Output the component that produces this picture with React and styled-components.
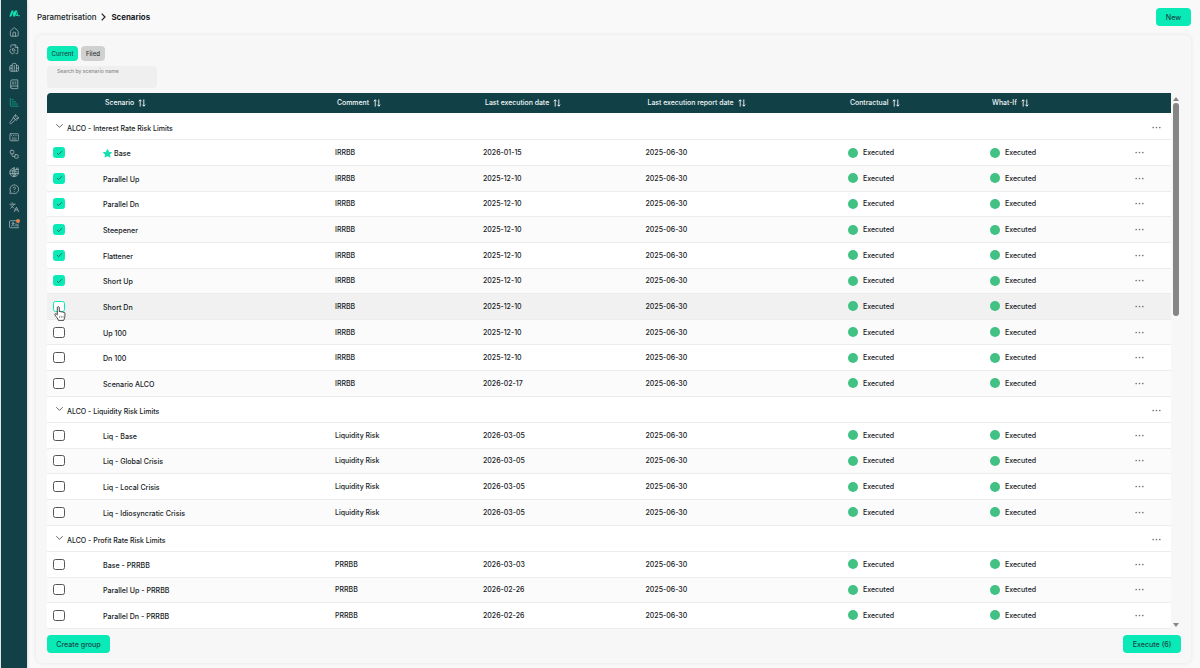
import styled, { createGlobalStyle, css } from 'styled-components';
import {
  ChartBarIncreasing,
  FileChartPie,
  House,
  Keyboard,
  Languages,
  MessageCircleQuestionMark,
  Workflow,
} from 'lucide-react';

const GlobalStyle = createGlobalStyle`
  * {
    box-sizing: border-box;
  }

  body {
    margin: 0;
    overflow: hidden;
    background: #f9f9f9;
    color: #14191c;
    font-family: Inter, 'Liberation Sans', sans-serif;
    font-size: 7px;
    font-weight: 450;
  }

  button {
    font-family: inherit;
  }
`;

const Layout = styled.div`
  display: flex;
  height: 668px;
`;

const Sidebar = styled.nav`
  display: flex;
  flex-direction: column;
  align-items: center;
  width: 27px;
  padding-top: 9px;
  background: #124047;
  border-left: 1px solid #dfe6e7;
  box-shadow: 1px 0 2px rgba(0, 0, 0, 0.12);
`;

const Logo = styled.svg`
  width: 11px;
  height: 9px;
  margin-bottom: 5px;
  fill: #12e3b0;
`;

const NavItem = styled.a`
  position: relative;
  display: flex;
  align-items: center;
  justify-content: center;
  height: 17.5px;
  color: ${({ $active }) => ($active ? '#10a887' : '#a3b8bb')};
`;

const Badge = styled.span`
  position: absolute;
  top: 3px;
  right: -1px;
  width: 4px;
  height: 4px;
  border-radius: 50%;
  background: #e8824a;
`;

const Main = styled.main`
  display: flex;
  flex-direction: column;
  flex: 1;
  min-width: 0;
  padding: 0 9px 5px;
`;

const TopBar = styled.header`
  display: flex;
  align-items: center;
  justify-content: space-between;
  height: 35px;
  padding: 0 0 1px 1px;
`;

const Breadcrumb = styled.div`
  display: flex;
  align-items: center;
  gap: 5px;
  font-size: 7.9px;
`;

const Current = styled.b`
  font-weight: 650;
  color: #15191c;
`;

const Button = styled.button`
  height: 18px;
  width: ${({ $width }) => $width}px;
  padding: 0;
  border: 0;
  border-radius: 4px;
  background: #09eab6;
  color: #17494a;
  font-size: 7.1px;
  font-weight: 500;
`;

const Card = styled.section`
  display: flex;
  flex-direction: column;
  flex: 1;
  padding: 10px 10px 0 11px;
  border-radius: 6px;
  background: #f7f7f7;
  box-shadow: 0 0 4px rgba(0, 0, 0, 0.09);
`;

const Tabs = styled.div`
  display: flex;
  gap: 3px;
  margin-top: 1px;
`;

const Tab = styled.button`
  width: ${({ $active }) => ($active ? 31 : 24)}px;
  height: 15px;
  padding: 0 0 1px;
  border: 0;
  border-radius: 4px;
  background: ${({ $active }) => ($active ? '#09eab6' : '#d0d0d0')};
  color: ${({ $active }) => ($active ? '#17494a' : '#333')};
  font-size: 6.1px;
  font-weight: 500;
`;

const Search = styled.div`
  width: 110px;
  height: 22px;
  margin: 5px 0;
  padding: 2px 10px;
  border-radius: 4px;
  background: #efefef;
  color: #8a8a8a;
  font-size: 5.1px;
  line-height: 6px;
`;

const TableArea = styled.div`
  display: flex;
  height: 535px;
`;

const Table = styled.div`
  width: 1124px;
`;

const columns = css`
  display: grid;
  grid-template-columns: 56px 232px 148px 162.5px 202.5px 142px 145px 1fr;
  align-items: center;
`;

const HeadRow = styled.div`
  ${columns}
  height: 20px;
  padding-bottom: 1px;
  border-radius: 4px 0 0 0;
  background: #124047;
  color: #f3f8f8;
  font-size: 6.9px;
  font-weight: 550;
`;

const HeadCell = styled.div`
  display: flex;
  align-items: center;
  gap: 4px;
  padding-left: 2px;
`;

const GroupRow = styled.div`
  display: flex;
  align-items: center;
  gap: 3px;
  height: ${({ $first }) => ($first ? 27.3 : 26.3)}px;
  padding: 4px 10px 0 8px;
  border-bottom: 1px solid #ececec;
  background: #fff;
  font-size: 7px;

  svg:first-child {
    margin-top: -4px;
  }

  svg:last-child {
    margin-left: auto;
    margin-top: -2px;
  }
`;

const Row = styled.div`
  ${columns}
  height: 25.65px;
  border-bottom: 1px solid #ececec;
  background: ${({ $hovered, $even }) =>
    $hovered ? '#f1f1f1' : $even ? '#fbfbfb' : '#fff'};
`;

const Name = styled.div`
  display: flex;
  align-items: center;
  gap: 2px;
  padding-top: 2px;
  font-size: 7.1px;
`;

const Status = styled.div`
  display: flex;
  align-items: center;
  gap: 5px;
`;

const Dot = styled.i`
  width: 10px;
  height: 10px;
  border-radius: 50%;
  background: #42c184;
`;

const CheckCell = styled.div`
  position: relative;
  padding-left: 6px;
`;

const Checkbox = styled.span`
  display: flex;
  align-items: center;
  justify-content: center;
  width: 12px;
  height: 11px;
  border: 1px solid
    ${({ $checked, $hovered }) => ($checked || $hovered ? '#09eab6' : '#555')};
  border-radius: 2.5px;
  background: ${({ $checked }) => ($checked ? '#09eab6' : '#fff')};
`;

const Pointer = styled.svg`
  position: absolute;
  left: 7px;
  top: 5px;
  width: 12px;
  height: 15px;
`;

const Scrollbar = styled.div`
  display: flex;
  flex-direction: column;
  align-items: center;
  justify-content: space-between;
  width: 10px;
  padding: 4px 0 1px;
`;

const Arrow = styled.span`
  border: 3px solid transparent;
  border-top-width: 0;
  border-bottom: 4px solid #858585;
  transform: ${({ $down }) => ($down ? 'rotate(180deg)' : 'none')};
`;

const Thumb = styled.span`
  width: 6px;
  height: 213px;
  margin: 2px 0 auto;
  border-radius: 3px;
  background: #858585;
`;

const Footer = styled.footer`
  display: flex;
  justify-content: space-between;
  padding-top: 7px;
`;

const SortIcon = () => (
  <svg width="8" height="8" viewBox="0 0 8 8" fill="none" stroke="currentColor" strokeWidth="0.9">
    <path d="M2.2 7.6V.8M.7 2.3 2.2.8l1.5 1.5M5.8.4v6.8M4.3 5.7l1.5 1.5 1.5-1.5" />
  </svg>
);

const MoreIcon = () => (
  <svg width="9" height="3" viewBox="0 0 9 3" fill="#777">
    <circle cx="1.2" cy="1.5" r=".85" />
    <circle cx="4.5" cy="1.5" r=".85" />
    <circle cx="7.8" cy="1.5" r=".85" />
  </svg>
);

const StarIcon = () => (
  <svg width="9" height="9" viewBox="0 0 24 24" fill="#14dfb0" stroke="#14dfb0" strokeWidth="3" strokeLinejoin="round">
    <path d="m12 2 3 6.5 7 .8-5.2 4.8L18.200 21 12 17.500 5.800 21l1.400-6.900L2 9.300l7-.8z" />
  </svg>
);

const HandCursor = () => (
  <Pointer viewBox="0 0 12 15" fill="#fff" stroke="#333" strokeWidth="0.9" strokeLinejoin="round">
    <path d="M3.300 8.900V1.700a1 1 0 0 1 2 0v4.200c.2-1 1.900-.8 1.900.3.300-.8 1.900-.7 1.900.4.400-.7 1.800-.4 1.800.7v3.100c0 1.500-.8 2.300-1.200 4H4.400c-.4-1.900-2.200-3.300-3.400-5.400-.6-1.100.7-1.800 1.400-1z" />
    <path d="M5.600 9.800v2M7.300 9.800v2M9 9.800v2" strokeWidth="0.5" />
  </Pointer>
);

const BreadcrumbArrow = () => (
  <svg width="5" height="8" viewBox="0 0 5 8" fill="none" stroke="#222" strokeWidth="1.2">
    <path d="m.7.7 3.300 3.300L.7 7.300" />
  </svg>
);

const GroupArrow = () => (
  <svg width="9" height="6" viewBox="0 0 9 6" fill="none" stroke="#555" strokeWidth="0.9">
    <path d="m1.300 1.200 3.200 3.200 3.200-3.200" />
  </svg>
);

const Glyph = ({ size, children }) => (
  <svg
    width={size}
    height={size}
    viewBox="0 0 24 24"
    fill="none"
    stroke="currentColor"
    strokeWidth="1.8"
    strokeLinecap="round"
    strokeLinejoin="round"
  >
    {children}
  </svg>
);

const BankIcon = ({ size }) => (
  <Glyph size={size}>
    <path d="M7 21V7a4 4 0 0 1 4-4h2a4 4 0 0 1 4 4v14M7 8H4a2 2 0 0 0-2 2v9a2 2 0 0 0 2 2h16a2 2 0 0 0 2-2v-9a2 2 0 0 0-2-2h-3M12 8v13M2 14h5M17 14h5" />
  </Glyph>
);

const LedgerIcon = ({ size }) => (
  <Glyph size={size}>
    <path d="M4 19V5a3 3 0 0 1 3-3h13v20H7a3 3 0 0 1-3-3 3 3 0 0 1 3-3h13M8 7h3M8 11h3M14 7h2M14 11h2" />
  </Glyph>
);

const HammerIcon = ({ size }) => (
  <Glyph size={size}>
    <path d="m11 9 4 4L5.500 21.500a2 2 0 0 1-3-3zM10 7l5-5 7 7-5 5zM15 2l-1 5M22 9l-5 1" />
  </Glyph>
);

const GlobeLockIcon = ({ size }) => (
  <Glyph size={size}>
    <path d="M12 2a10 10 0 1 0 10 11M12 2c-5 5-5 15 0 20 2-2 3.500-5 3.800-8M2.500 9H12M2.500 15h19M12 2v20M15 6h8v5h-8zM17 6V4a2 2 0 0 1 4 0v2" />
  </Glyph>
);

const IdIcon = ({ size }) => (
  <Glyph size={size}>
    <path d="M17 4H3a2 2 0 0 0-2 2v12a2 2 0 0 0 2 2h18a2 2 0 0 0 2-2v-8M6 16c0-4 6-4 6 0M16 11v5M19 13v3" />
    <circle cx="9" cy="10" r="2" />
  </Glyph>
);

const navIcons = [
  House,
  FileChartPie,
  BankIcon,
  LedgerIcon,
  ChartBarIncreasing,
  HammerIcon,
  Keyboard,
  Workflow,
  GlobeLockIcon,
  MessageCircleQuestionMark,
  Languages,
  IdIcon,
];

const headers = [
  'Scenario',
  'Comment',
  'Last execution date',
  'Last execution report date',
  'Contractual',
  'What-If',
];

const groups = [
  {
    title: 'ALCO - Interest Rate Risk Limits',
    comment: 'IRRBB',
    rows: [
      { name: 'Base', date: '2026-01-15', checked: true, starred: true },
      { name: 'Parallel Up', date: '2025-12-10', checked: true },
      { name: 'Parallel Dn', date: '2025-12-10', checked: true },
      { name: 'Steepener', date: '2025-12-10', checked: true },
      { name: 'Flattener', date: '2025-12-10', checked: true },
      { name: 'Short Up', date: '2025-12-10', checked: true },
      { name: 'Short Dn', date: '2025-12-10', hovered: true },
      { name: 'Up 100', date: '2025-12-10' },
      { name: 'Dn 100', date: '2025-12-10' },
      { name: 'Scenario ALCO', date: '2026-02-17' },
    ],
  },
  {
    title: 'ALCO - Liquidity Risk Limits',
    comment: 'Liquidity Risk',
    rows: [
      { name: 'Liq - Base', date: '2026-03-05' },
      { name: 'Liq - Global Crisis', date: '2026-03-05' },
      { name: 'Liq - Local Crisis', date: '2026-03-05' },
      { name: 'Liq - Idiosyncratic Crisis', date: '2026-03-05' },
    ],
  },
  {
    title: 'ALCO - Profit Rate Risk Limits',
    comment: 'PRRBB',
    rows: [
      { name: 'Base - PRRBB', date: '2026-03-03' },
      { name: 'Parallel Up - PRRBB', date: '2026-02-26' },
      { name: 'Parallel Dn - PRRBB', date: '2026-02-26' },
    ],
  },
];

const ScenarioRow = ({ row, comment, even }) => (
  <Row $even={even} $hovered={row.hovered}>
    <CheckCell>
      <Checkbox $checked={row.checked} $hovered={row.hovered}>
        {row.checked && (
          <svg width="7" height="6" viewBox="0 0 7 6" fill="none" stroke="#145a54" strokeWidth="0.9">
            <path d="m1 3 1.600 1.600L6 1.200" />
          </svg>
        )}
      </Checkbox>
      {row.hovered && <HandCursor />}
    </CheckCell>
    <Name>
      {row.starred && <StarIcon />}
      {row.name}
    </Name>
    <div>{comment}</div>
    <div>{row.date}</div>
    <div>2025-06-30</div>
    <Status>
      <Dot />
      Executed
    </Status>
    <Status>
      <Dot />
      Executed
    </Status>
    <MoreIcon />
  </Row>
);

const App = () => (
  <Layout>
    <GlobalStyle />
    <Sidebar>
      <Logo viewBox="0 0 11 9">
        <path d="M2.700 1.500h2L2.400 7.500H.3zM6.400 1.500h2L6.100 7.500H4.200L3.900 4z" />
        <path d="M8.300 2.500 9.100 7H7z" />
        <circle cx="10" cy="6.800" r=".8" />
      </Logo>
      {navIcons.map((Icon, i) => (
        <NavItem key={i} $active={i === 4}>
          <Icon size={10.5} strokeWidth={1.8} />
          {i === navIcons.length - 1 && <Badge />}
        </NavItem>
      ))}
    </Sidebar>
    <Main>
      <TopBar>
        <Breadcrumb>
          Parametrisation
          <BreadcrumbArrow />
          <Current>Scenarios</Current>
        </Breadcrumb>
        <Button $width={35}>New</Button>
      </TopBar>
      <Card>
        <Tabs>
          <Tab $active>Current</Tab>
          <Tab>Filed</Tab>
        </Tabs>
        <Search>Search by scenario name</Search>
        <TableArea>
          <Table>
            <HeadRow>
              <span />
              {headers.map((label) => (
                <HeadCell key={label}>
                  {label}
                  <SortIcon />
                </HeadCell>
              ))}
            </HeadRow>
            {groups.map((group, g) => (
              <div key={group.title}>
                <GroupRow $first={g === 0}>
                  <GroupArrow />
                  {group.title}
                  <MoreIcon />
                </GroupRow>
                {group.rows.map((row, i) => (
                  <ScenarioRow
                    key={row.name}
                    row={row}
                    comment={group.comment}
                    even={i % 2 === 1}
                  />
                ))}
              </div>
            ))}
          </Table>
          <Scrollbar>
            <Arrow />
            <Thumb />
            <Arrow $down />
          </Scrollbar>
        </TableArea>
        <Footer>
          <Button $width={63}>Create group</Button>
          <Button $width={58}>Execute (6)</Button>
        </Footer>
      </Card>
    </Main>
  </Layout>
);

export default App;
